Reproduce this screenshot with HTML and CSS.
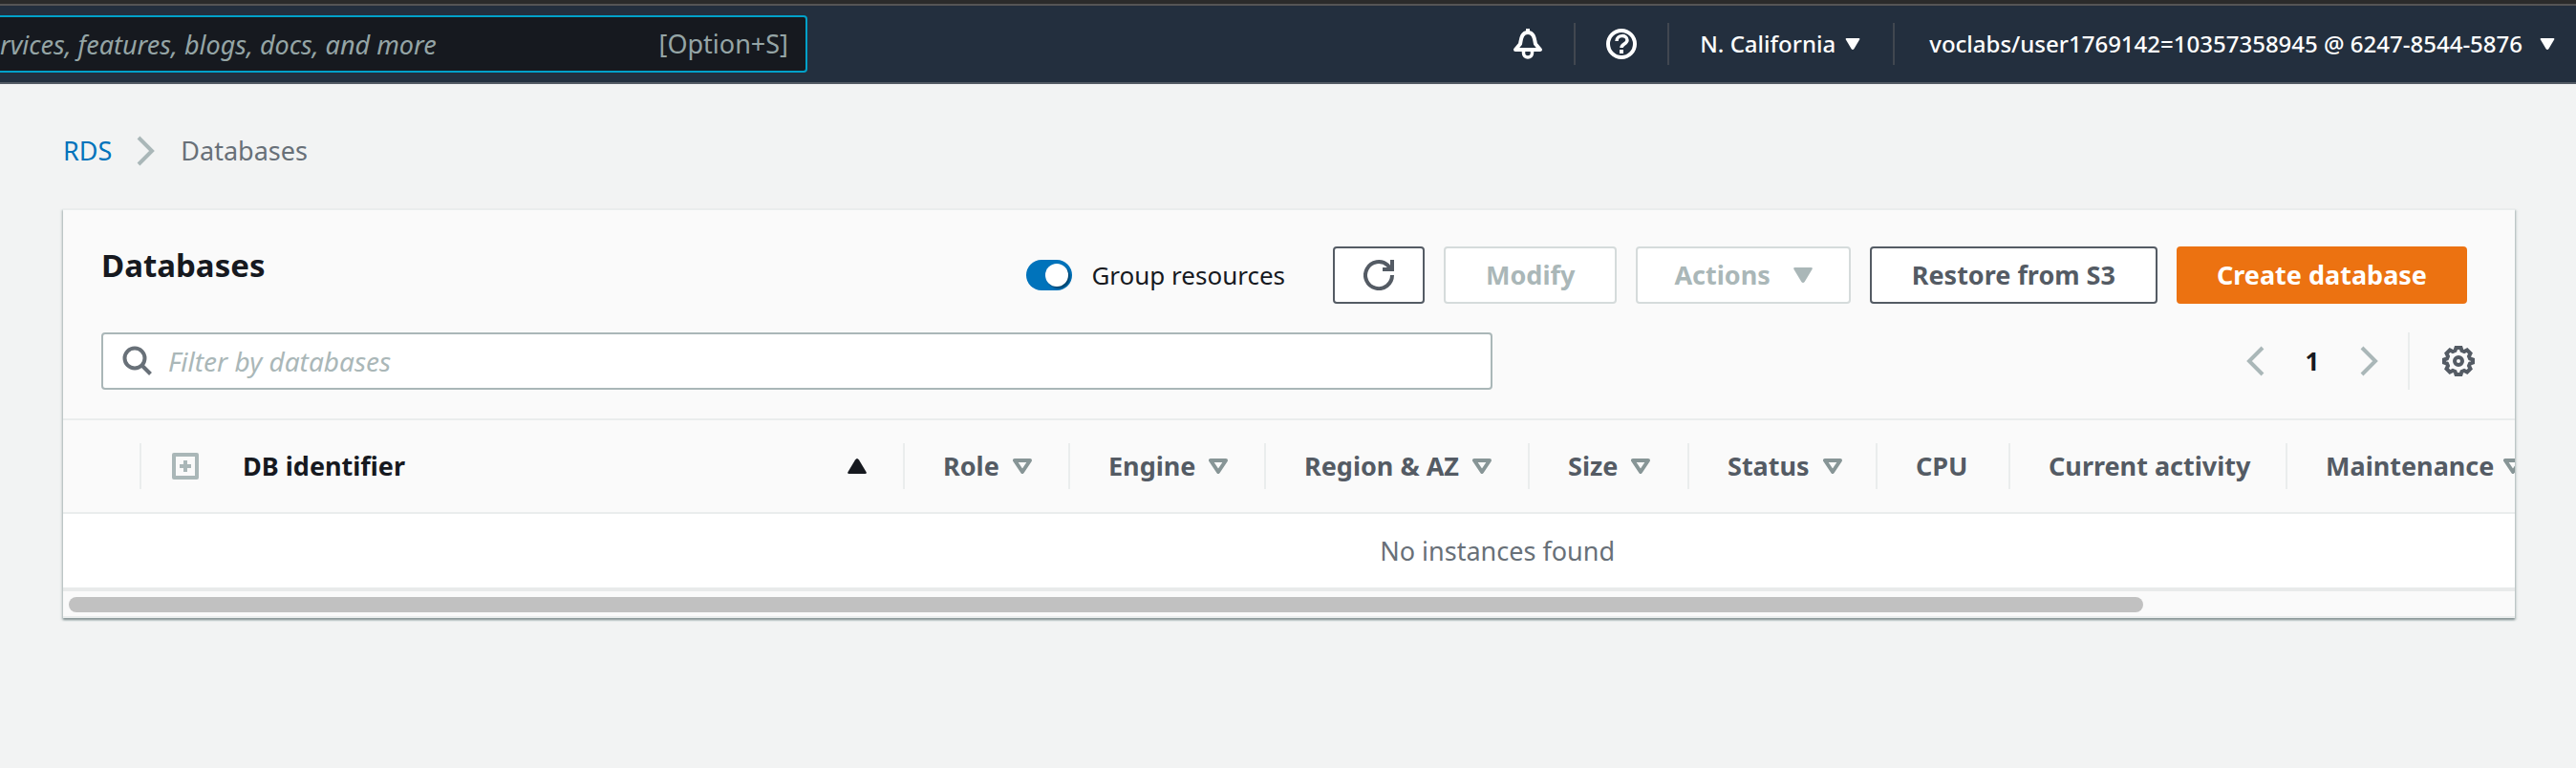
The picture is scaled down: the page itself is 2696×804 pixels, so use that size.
FILE: index.html
```html
<!DOCTYPE html>
<html lang="en">
<head>
<meta charset="utf-8">
<meta name="viewport" content="width=device-width, initial-scale=1">
<title>Databases - RDS</title>
<link rel="stylesheet" href="styles.css">
</head>
<body>
<svg width="0" height="0" class="sprite" aria-hidden="true">
  <symbol id="caret" viewBox="0 0 20 16"><path d="M1.500 0h17q2 0 1 2L12 14.500q-2 3-4 0L.500 2Q-.500 0 1.500 0z" fill="currentColor"/></symbol>
  <symbol id="sort" viewBox="0 0 20 16"><path d="M2 2h16L10 14z" fill="none" stroke="currentColor" stroke-width="4" stroke-linejoin="round"/></symbol>
</svg>
<header class="topnav">
  <form class="search" role="search">
    <input class="search-input" type="search" aria-label="Search" placeholder="rvices, features, blogs, docs, and more">
    <span class="search-key">[Option+S]</span>
  </form>
  <nav class="topnav-menu" aria-label="Account">
    <button class="nav-item nav-icon" type="button" aria-label="Notifications">
      <svg width="32" height="32" viewBox="0 0 32 32" fill="none" stroke="#fff" stroke-width="4" stroke-linejoin="round"><path d="M16 0v5M3 22l5-6c1-4 1-12 8-12s7 8 8 12l5 6z"/><path d="M11.500 22v3.500a4.500 4.500 0 0 0 9 0V22" stroke-width="3.500"/></svg>
    </button>
    <button class="nav-item nav-icon" type="button" aria-label="Help">
      <svg width="32" height="32" viewBox="0 0 32 32" fill="none" stroke="#fff" stroke-width="4"><circle cx="16" cy="16" r="14"/><path d="M11 13c0-7 11-7 11-1 0 4-6 4-6 8" stroke-width="3.500"/><path d="M14 22h4v4h-4z" fill="#fff" stroke="none"/></svg>
    </button>
    <button class="nav-item nav-region" type="button">N. California <svg class="nav-caret"><use href="#caret"/></svg></button>
    <button class="nav-item nav-account" type="button">voclabs/user1769142=10357358945 @ 6247-8544-5876 <svg class="nav-caret"><use href="#caret"/></svg></button>
  </nav>
</header>
<main class="page">
  <nav class="crumbs" aria-label="Breadcrumb">
    <a href="#rds">RDS</a>
    <svg width="20" height="32" viewBox="0 0 20 32" fill="none" stroke="#aab7b8" stroke-width="4"><path d="M2 2l14 14L2 30"/></svg>
    <span>Databases</span>
  </nav>
  <section class="panel">
    <div class="panel-head">
      <div class="title-row">
        <h1>Databases</h1>
        <div class="actions">
          <label class="toggle"><input type="checkbox" role="switch" checked><span>Group resources</span></label>
          <button class="btn btn-refresh" type="button" aria-label="Refresh">
            <svg width="32" height="32" viewBox="0 0 32 32" fill="none" stroke="currentColor" stroke-width="4"><path d="M30 16a14 14 0 1 1-4.500-10.200l3 4"/><path d="M30 0v10H20"/></svg>
          </button>
          <button class="btn" type="button" disabled>Modify</button>
          <button class="btn btn-menu" type="button" disabled>Actions <svg class="caret"><use href="#caret"/></svg></button>
          <button class="btn" type="button">Restore from S3</button>
          <button class="btn btn-primary" type="button">Create database</button>
        </div>
      </div>
      <div class="filter-row">
        <label class="filter">
          <svg width="32" height="32" viewBox="0 0 32 32" fill="none" stroke="#687078" stroke-width="4"><circle cx="13" cy="13" r="10.500"/><path d="M20 20l9.500 9.500"/></svg>
          <input type="text" aria-label="Filter by databases" placeholder="Filter by databases">
        </label>
        <div class="pager">
          <button type="button" aria-label="Previous page"><svg width="20" height="32" viewBox="0 0 20 32"><path d="M18 2L4 16l14 14"/></svg></button>
          <button class="pager-page" type="button" aria-current="page">1</button>
          <button type="button" aria-label="Next page"><svg width="20" height="32" viewBox="0 0 20 32"><path d="M2 2l14 14L2 30"/></svg></button>
          <button class="pager-settings" type="button" aria-label="Preferences">
            <svg width="34" height="34" viewBox="-17 -17 34 34"><path d="M-2.500-14h5l1 3 2.500 1 3-1.500 3.500 3.500-1.500 3 1 2.500 3 1v3l-3 1-1 2.500 1.500 3-3.500 3.500-3-1.500-2.500 1-1 3h-5l-1-3-2.500-1-3 1.500-3.500-3.500 1.500-3-1-2.500-3-1v-3l3-1 1-2.500-1.500-3 3.500-3.500 3 1.500 2.500-1z"/><circle r="4"/></svg>
          </button>
        </div>
      </div>
    </div>
    <div class="table-wrap">
      <table>
        <colgroup><col class="w-select"><col class="w-id"><col class="w-role"><col class="w-engine"><col class="w-region"><col class="w-size"><col class="w-status"><col class="w-cpu"><col class="w-activity"><col></colgroup>
        <thead>
          <tr>
            <th scope="col"><div class="cell"></div></th>
            <th scope="col" class="sorted"><div class="cell">
              <button class="expand" type="button" aria-label="Expand all"><svg width="28" height="28" viewBox="0 0 28 28"><path d="M2 2h24v24H2zM14 8v12M8 14h12" fill="none" stroke="#aab7b8" stroke-width="4" stroke-linejoin="round"/></svg></button>
              <span>DB identifier</span><svg class="caret up"><use href="#caret"/></svg></div></th>
            <th scope="col"><div class="cell">Role<svg class="caret"><use href="#sort"/></svg></div></th>
            <th scope="col"><div class="cell">Engine<svg class="caret"><use href="#sort"/></svg></div></th>
            <th scope="col"><div class="cell">Region &amp; AZ<svg class="caret"><use href="#sort"/></svg></div></th>
            <th scope="col"><div class="cell">Size<svg class="caret"><use href="#sort"/></svg></div></th>
            <th scope="col"><div class="cell">Status<svg class="caret"><use href="#sort"/></svg></div></th>
            <th scope="col"><div class="cell">CPU</div></th>
            <th scope="col"><div class="cell">Current activity</div></th>
            <th scope="col"><div class="cell last">Maintenance<svg class="caret"><use href="#sort"/></svg></div></th>
          </tr>
        </thead>
        <tbody><tr><td colspan="10">No instances found</td></tr></tbody>
      </table>
    </div>
    <div class="scrollbar"><div class="thumb"></div></div>
  </section>
</main>
</body>
</html>
```
FILE: styles.css
```css
* { box-sizing: border-box; }
body { margin: 0; background: #f2f3f3; color: #16191f; font: 26px/36px "Noto Sans", "Open Sans", sans-serif; }
button, input { font: inherit; color: inherit; }
button { margin: 0; padding: 0; border: 0; background: none; }
svg { display: block; flex: none; }
.sprite { position: absolute; }
.caret { width: 20px; height: 16px; }

.topnav { display: flex; justify-content: space-between; align-items: center; height: 88px; padding-top: 4px; background: #232f3e; border-top: 4px solid #2b2b2b; border-bottom: 2px solid #545b64; box-shadow: inset 0 2px #555; }
.search { display: flex; align-items: center; width: 845px; height: 60px; padding-right: 18px; margin-top: -2px; background: #16191f; border: 2px solid #00a1c9; border-left: 0; border-radius: 0 4px 4px 0; color: #95a5a6; font-size: 27px; }
.search-input { flex: 1; min-width: 0; height: 100%; padding: 0; border: 0; background: none; outline: 0; }
.search-input::placeholder { color: #95a5a6; font-style: italic; opacity: 1; }
.topnav-menu { display: flex; align-items: center; margin-top: -2px; color: #fff; font-size: 24px; font-weight: 500; }
.nav-item { display: flex; align-items: center; justify-content: space-between; height: 44px; padding: 0 34px 0 32px; white-space: nowrap; }
.nav-item + .nav-item { border-left: 2px solid #414750; }
.nav-icon { padding: 0 32px; }
.nav-region { width: 236px; }
.nav-account { gap: 18px; padding: 0 22px 0 36px; }
.nav-caret { width: 16px; height: 12px; }

.page { padding: 52px 64px 40px 66px; }
.crumbs { display: flex; align-items: center; gap: 26px; margin-bottom: 42px; color: #687078; font-size: 27px; }
.crumbs a { color: #0073bb; text-decoration: none; }

.panel { background: #fafafa; border-top: 2px solid #eaeded; border-bottom: 2px solid #eaeded; box-shadow: 0 2px 2px 0 #879596, 2px 2px 2px 0 #d5dbdb, -2px 2px 2px 0 #d5dbdb; }
.panel-head { padding: 38px 50px 30px 40px; }
.title-row { display: flex; justify-content: space-between; }
h1 { margin: 0; font-size: 33px; line-height: 40px; }
.actions { display: flex; align-items: center; gap: 20px; }
.toggle { display: flex; align-items: center; gap: 20px; margin-right: 30px; }
.toggle input { appearance: none; width: 48px; height: 32px; margin: 0; padding: 4px; border-radius: 16px; background: #0073bb; }
.toggle input::before { content: ""; display: block; width: 24px; height: 24px; margin-left: 16px; border-radius: 50%; background: #fff; box-shadow: 2px 2px 2px #00456f; }
.btn { display: flex; align-items: center; justify-content: center; gap: 24px; height: 60px; padding: 0 42px; border: 2px solid #545b64; border-radius: 4px; background: #fff; color: #545b64; font-size: 27px; font-weight: 700; white-space: nowrap; }
.btn:disabled { border-color: #d5dbdb; color: #aab7b8; }
.btn-refresh { padding: 0 30px; }
.btn-menu { padding: 0 38px; }
.btn-primary { padding: 0 40px; border-color: #ec7211; background: #ec7211; color: #fff; }

.filter-row { display: flex; justify-content: space-between; align-items: center; margin-top: 30px; }
.filter { display: flex; align-items: center; gap: 16px; flex: 0 1 1456px; height: 60px; padding: 0 20px; border: 2px solid #aab7b8; border-radius: 4px; background: #fff; }
.filter input { flex: 1; min-width: 0; padding: 0; border: 0; outline: 0; background: none; font-size: 28px; }
.filter input::placeholder { color: #aab7b8; font-style: italic; opacity: 1; }
.pager { display: flex; align-items: center; margin-right: -8px; }
.pager svg { fill: none; stroke: #aab7b8; stroke-width: 4px; }
.pager-page { width: 100px; font-weight: 700; }
.pager-settings { display: flex; align-items: center; height: 60px; margin-left: 30px; padding-left: 34px; border-left: 2px solid #eaeded; }
.pager .pager-settings svg { stroke: #545b64; }

.table-wrap { overflow: hidden; border-top: 2px solid #eaeded; border-bottom: 4px solid #e8eaea; background: #fff; }
table { width: 117%; table-layout: fixed; border-collapse: collapse; font-size: 27px; }
th { padding: 24px 0; background: #fafafa; border-bottom: 2px solid #eaeded; color: #545b64; text-align: left; white-space: nowrap; }
td { height: 78px; padding: 0; color: #687078; text-align: center; }
.cell { display: flex; align-items: center; gap: 14px; height: 48px; padding: 0 38px 0 40px; border-right: 2px solid #eaeded; }
.cell .caret { color: #879596; }
.cell.last { gap: 10px; border-right: 0; }
.sorted .cell { gap: 46px; padding-left: 32px; color: #16191f; }
.sorted .caret { margin-left: auto; color: #16191f; }
.up { transform: rotate(180deg); }
.w-select { width: 82px; }
.w-id { width: 799px; }
.w-role { width: 173px; }
.w-engine { width: 205px; }
.w-region { width: 276px; }
.w-size { width: 167px; }
.w-status { width: 197px; }
.w-cpu { width: 139px; }
.w-activity { width: 290px; }

.scrollbar { padding: 6px 6px 4px; }
.thumb { width: 85%; height: 16px; border-radius: 8px; background: #c1c1c1; }
```
